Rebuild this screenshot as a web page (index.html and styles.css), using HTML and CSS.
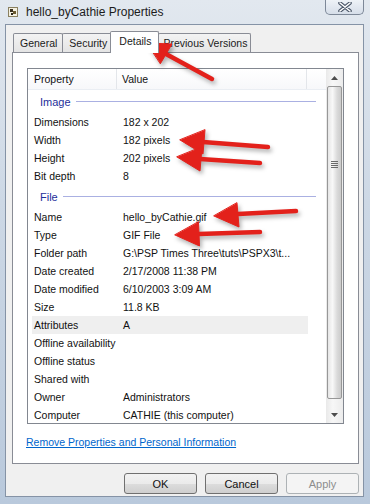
FILE: index.html
```html
<!DOCTYPE html>
<html lang="en">
<head>
  <meta charset="UTF-8">
  <meta name="viewport" content="width=device-width, initial-scale=1.0">
  <title>hello_byCathie Properties</title>
  <link rel="stylesheet" href="styles.css">
</head>
<body>
  <div class="window">
    <div class="titlebar">
      <svg class="app-icon" width="10" height="10" viewBox="0 0 10 10">
        <rect x="0.5" y="0.5" width="9" height="9" fill="#f4f0e0" stroke="#8a8060"/>
        <rect x="2" y="2" width="3" height="3" fill="#3a3020"/>
        <rect x="5" y="4" width="3" height="3" fill="#6a5a30"/>
        <rect x="3" y="6" width="2" height="2" fill="#2a2418"/>
      </svg>
      <span class="title">hello_byCathie Properties</span>
      <div class="close-btn">
        <svg width="14" height="10" viewBox="0 0 14 10">
          <path d="M2 1 L12 9 M12 1 L2 9" stroke="#4a5668" stroke-width="3.6" stroke-linecap="round"/>
          <path d="M2 1 L12 9 M12 1 L2 9" stroke="#ffffff" stroke-width="1.6" stroke-linecap="round"/>
        </svg>
      </div>
    </div>

    <div class="client">
      <div class="tabs">
        <div class="tab">General</div>
        <div class="tab">Security</div>
        <div class="tab active">Details</div>
        <div class="tab tab-prev">Previous Versions</div>
      </div>

      <div class="panel">
        <div class="list">
          <div class="list-body">
            <div class="list-head">
              <div class="h-prop">Property</div>
              <div class="h-val">Value</div>
              <div class="h-rest"></div>
            </div>

            <div class="group"><span>Image</span></div>
            <div class="row"><div class="c1">Dimensions</div><div class="c2">182 x 202</div></div>
            <div class="row"><div class="c1">Width</div><div class="c2">182 pixels</div></div>
            <div class="row"><div class="c1">Height</div><div class="c2">202 pixels</div></div>
            <div class="row"><div class="c1">Bit depth</div><div class="c2">8</div></div>

            <div class="group"><span>File</span></div>
            <div class="row"><div class="c1">Name</div><div class="c2">hello_byCathie.gif</div></div>
            <div class="row"><div class="c1">Type</div><div class="c2">GIF File</div></div>
            <div class="row"><div class="c1">Folder path</div><div class="c2">G:\PSP Times Three\tuts\PSPX3\t...</div></div>
            <div class="row"><div class="c1">Date created</div><div class="c2">2/17/2008 11:38 PM</div></div>
            <div class="row"><div class="c1">Date modified</div><div class="c2">6/10/2003 3:09 AM</div></div>
            <div class="row"><div class="c1">Size</div><div class="c2">11.8 KB</div></div>
            <div class="row hover"><div class="c1">Attributes</div><div class="c2">A</div></div>
            <div class="row"><div class="c1">Offline availability</div><div class="c2"></div></div>
            <div class="row"><div class="c1">Offline status</div><div class="c2"></div></div>
            <div class="row"><div class="c1">Shared with</div><div class="c2"></div></div>
            <div class="row"><div class="c1">Owner</div><div class="c2">Administrators</div></div>
            <div class="row"><div class="c1">Computer</div><div class="c2">CATHIE (this computer)</div></div>
          </div>

          <div class="scrollbar">
            <div class="sb-btn">
              <svg width="7" height="4" viewBox="0 0 7 4"><path d="M0 4 L3.5 0 L7 4 Z" fill="#4d4d4d"/></svg>
            </div>
            <div class="sb-track">
              <div class="sb-thumb">
                <div class="grip"></div>
              </div>
            </div>
            <div class="sb-btn">
              <svg width="7" height="4" viewBox="0 0 7 4"><path d="M0 0 L3.5 4 L7 0 Z" fill="#4d4d4d"/></svg>
            </div>
          </div>
        </div>

        <a class="remove-link" href="#">Remove Properties and Personal Information</a>
      </div>

      <div class="buttons">
        <button class="btn">OK</button>
        <button class="btn">Cancel</button>
        <button class="btn" disabled>Apply</button>
      </div>
    </div>

    <!-- red annotation arrows -->
    <svg class="arrows" width="370" height="504" viewBox="0 0 370 504">
      <g stroke="#e3211b" stroke-width="4.5" stroke-linecap="round" fill="#e3211b">
        <line x1="212" y1="79" x2="166" y2="54"/>
        <path d="M147 43 L172 44 L160.5 63.5 Z" stroke-width="1"/>

        <line x1="268" y1="147" x2="203" y2="142"/>
        <path d="M180 140 L203 154 L205 130 Z" stroke-width="1"/>

        <line x1="260" y1="163" x2="200" y2="159"/>
        <path d="M177 157 L200 171 L202 147 Z" stroke-width="1"/>

        <line x1="296" y1="211" x2="238" y2="214"/>
        <path d="M214 216 L239 227 L237 203 Z" stroke-width="1"/>

        <line x1="260" y1="232" x2="199" y2="234"/>
        <path d="M175 235 L199.5 246 L198.5 222 Z" stroke-width="1"/>
      </g>
    </svg>
  </div>
</body>
</html>
```

FILE: styles.css
```css
/* Windows 7 style properties dialog */
* {
  box-sizing: border-box;
}
body {
  margin: 0;
  font-family: 'Liberation Sans', Arial, sans-serif;
  font-size: 10.5px;
  color: #111;
}
.window {
  position: relative;
  width: 370px;
  height: 504px;
  overflow: hidden;
  background: linear-gradient(to bottom, #e2e8ef 0%, #cdd8e5 40%, #b9c9dc 100%);
}

/* title bar */
.titlebar {
  height: 24px;
  display: flex;
  align-items: flex-start;
}
.app-icon {
  margin: 7px 0 0 8px;
}
.title {
  margin: 5px 0 0 8px;
  font-size: 12px;
  line-height: 14px;
  color: #1c1c1c;
}
.close-btn {
  margin-left: auto;
  margin-right: 6px;
  width: 39px;
  height: 15px;
  border: 1px solid #7d8898;
  border-top: none;
  border-radius: 0 0 5px 5px;
  background: linear-gradient(to bottom, #eef2f7, #d6dee9);
  display: flex;
  align-items: center;
  justify-content: center;
}

/* client area */
.client {
  margin-left: 5px;
  width: 359px;
  height: 473px;
  border: 1px solid #8593a6;
  background: #f0f0f0;
}
.tabs {
  display: flex;
  align-items: flex-end;
  height: 27px;
  padding-left: 7px;
}
.tab {
  height: 19px;
  line-height: 18px;
  padding: 0 5px 0 6px;
  margin-right: -1px;
  border: 1px solid #898c95;
  border-bottom: none;
  border-radius: 2px 2px 0 0;
  background: linear-gradient(to bottom, #f3f3f3, #e4e4e4);
  color: #1a1a1a;
}
.tab.active {
  position: relative;
  z-index: 1;
  height: 22px;
  margin: 0 -1px -1px -2px;
  padding: 0 7px 0 8px;
  background: #fff;
}
.tab-prev {
  padding: 0 3px 0 4px;
}
.panel {
  margin-left: 6px;
  width: 347px;
  height: 412px;
  border: 1px solid #898c95;
  background: #fff;
}

/* list view */
.list {
  display: flex;
  margin: 15px 14px 0 14px;
  height: 356px;
  border: 1px solid #828790;
}
.list-body {
  flex: 1;
  overflow: hidden;
}
.list-head {
  display: flex;
  height: 21px;
  line-height: 20px;
  border-bottom: 1px solid #eaeef3;
  background: linear-gradient(to bottom, #fff, #f7f8fa);
}
.h-prop {
  width: 89px;
  padding-left: 6px;
  border-right: 1px solid #e3e6ea;
}
.h-val {
  width: 190px;
  padding-left: 5px;
  border-right: 1px solid #e3e6ea;
}
.h-rest {
  flex: 1;
}
.group {
  display: flex;
  align-items: center;
  height: 23px;
  padding: 0 10px 0 12px;
  color: #1e2f9a;
  font-size: 11px;
}
.group::after {
  content: "";
  flex: 1;
  height: 1px;
  margin-left: 5px;
  background: #aab0e2;
}
.row {
  display: flex;
  height: 18px;
  line-height: 18px;
  margin-left: 4px;
  width: 276px;
  white-space: nowrap;
}
.row.hover {
  background: #efefef;
}
.c1 {
  width: 86px;
  padding-left: 2px;
}
.c2 {
  flex: 1;
  padding-left: 5px;
}

/* scrollbar */
.scrollbar {
  width: 17px;
  display: flex;
  flex-direction: column;
  background: linear-gradient(to right, #e9e9e9, #f7f7f7 40%, #ececec);
}
.sb-btn {
  height: 17px;
  display: flex;
  align-items: center;
  justify-content: center;
}
.sb-track {
  flex: 1;
  padding: 0 1px 4px 1px;
}
.sb-thumb {
  height: 313px;
  border: 1px solid #979797;
  border-radius: 2px;
  background: linear-gradient(to right, #e6e6e6, #f8f8f8 35%, #dadada 70%, #cbcbcb);
  display: flex;
  align-items: center;
  justify-content: center;
}
.grip {
  width: 7px;
  height: 7px;
  margin-top: -156px;
  background: repeating-linear-gradient(to bottom, #6a6a6a 0 1px, transparent 1px 2px);
}

.remove-link {
  display: inline-block;
  margin: 12px 0 0 13px;
  line-height: 12px;
  color: #0066cc;
  text-decoration: underline;
}

/* dialog buttons */
.buttons {
  display: flex;
  justify-content: flex-end;
  gap: 8px;
  margin-top: 9px;
  padding-right: 4px;
}
.btn {
  width: 73px;
  height: 21px;
  padding: 0;
  font-family: inherit;
  font-size: 11px;
  color: #111;
  border: 1px solid #707070;
  border-radius: 3px;
  background: linear-gradient(to bottom, #f2f2f2 0%, #ebebeb 50%, #dddddd 51%, #cfcfcf 100%);
}
.btn:disabled {
  border-color: #adb2b5;
  background: #f4f4f4;
  color: #8d8d8d;
}

.arrows {
  position: absolute;
  top: 0;
  left: 0;
  pointer-events: none;
  filter: drop-shadow(2px 3px 2px rgba(0, 0, 0, 0.3));
}
```
